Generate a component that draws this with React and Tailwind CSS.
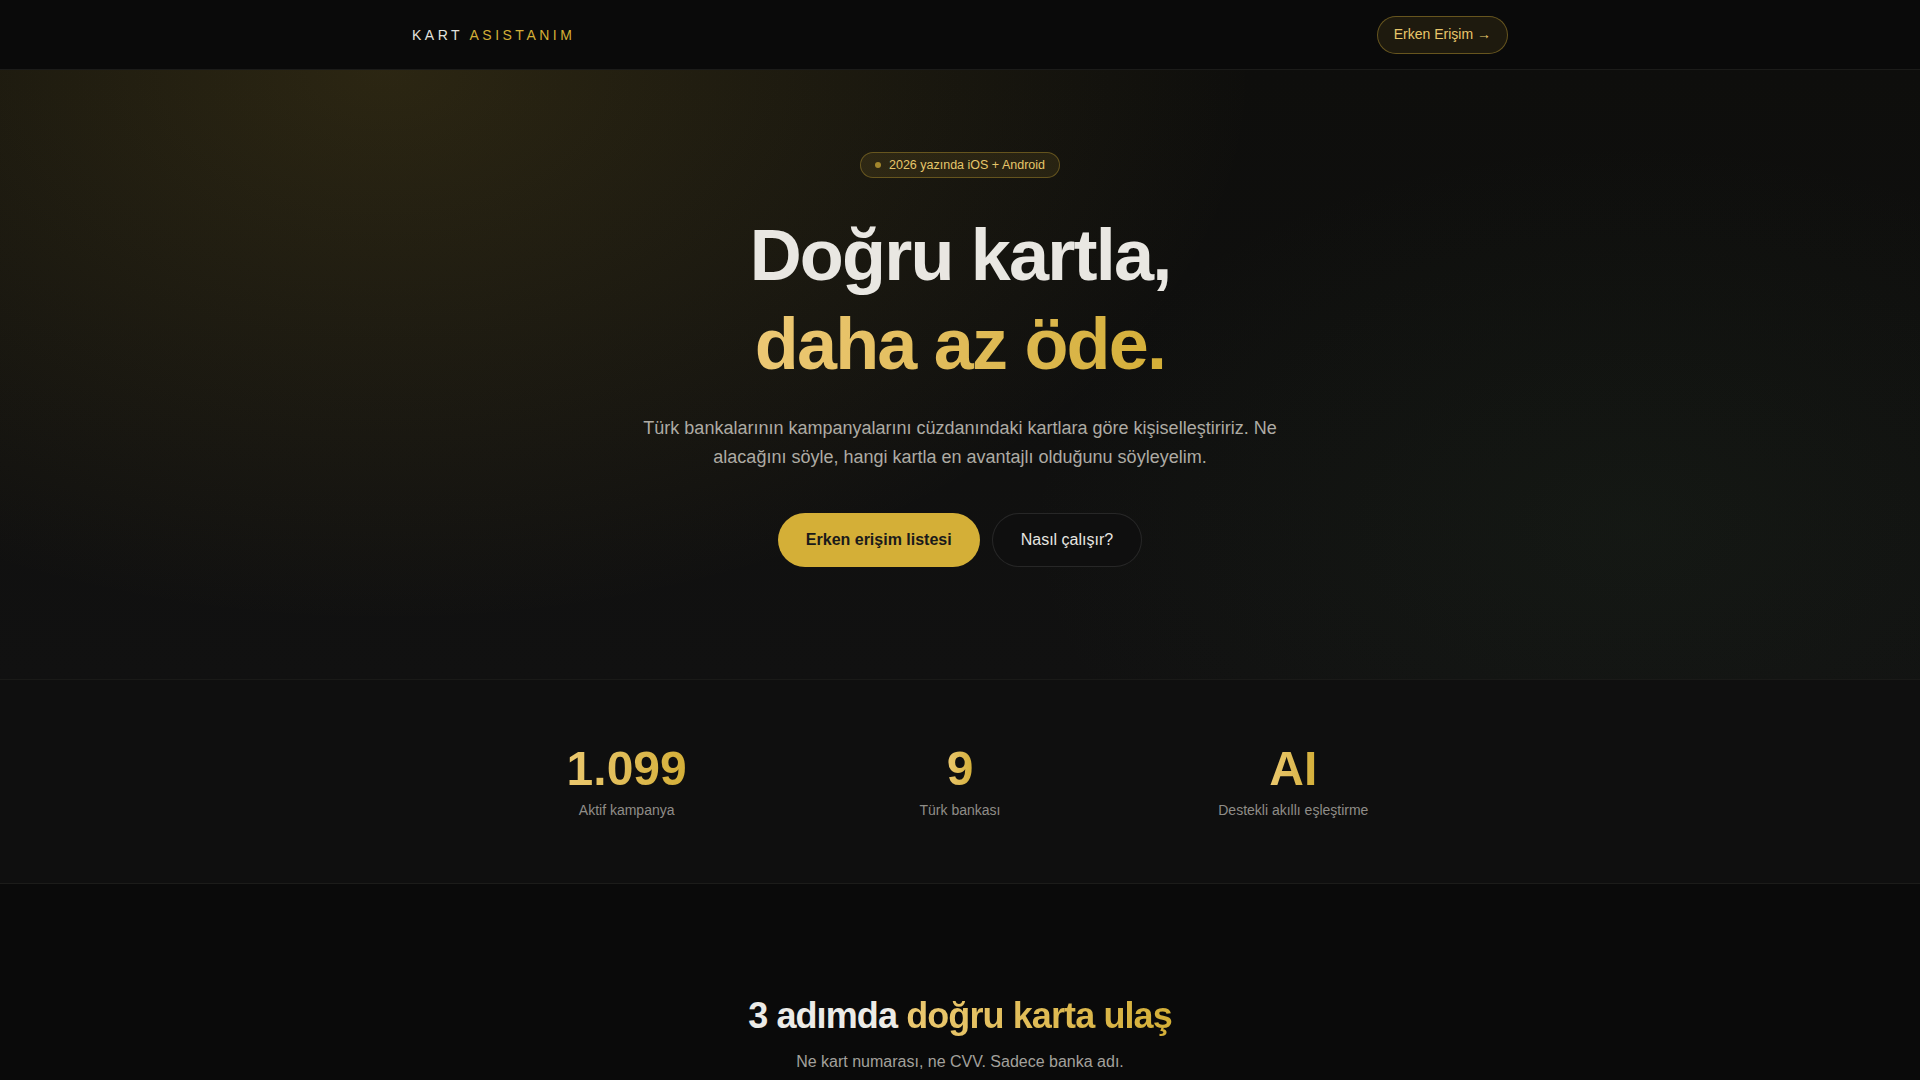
import React from 'react';

const stats = [
    { value: '1.099', label: 'Aktif kampanya' },
    { value: '9', label: 'Türk bankası' },
    { value: 'AI', label: 'Destekli akıllı eşleştirme' },
];

export default function App() {
    return (
        <div className="min-h-screen bg-[#0a0a0a] text-[#e8e6e1] font-['Liberation_Sans',Arial,sans-serif]">
            {/* nav */}
            <header className="h-[70px] bg-[#0a0a0a] border-b border-[#1c1c1a]">
                <div className="w-[1096px] mx-auto h-full flex items-center justify-between">
                    <div className="text-[14px] tracking-[0.25em] pt-[2px]">
                        <span className="text-[#e2e2de]">KART</span>{' '}
                        <span className="text-[#d4af37]">ASISTANIM</span>
                    </div>
                    <button className="h-[38px] px-4 rounded-full border border-[#d4af37]/40 bg-[#d4af37]/10 text-[#e8c66a] text-[14px]">
                        Erken Erişim →
                    </button>
                </div>
            </header>

            {/* hero */}
            <section className="h-[610px] border-b border-[#1a1a18] bg-[radial-gradient(ellipse_65%_130%_at_20%_0%,rgba(212,175,55,0.15),transparent_70%),radial-gradient(ellipse_45%_90%_at_85%_75%,rgba(60,100,60,0.09),transparent_70%),linear-gradient(#0e0e0c,#111111)]">
                <div className="flex flex-col items-center pt-[82px]">
                    <div className="h-[26px] px-[14px] flex items-center gap-2 rounded-full border border-[#d4af37]/35 bg-[#d4af37]/10 text-[12.5px] text-[#e6c66a]">
                        <span className="w-[6px] h-[6px] rounded-full bg-[#d4af37]/70" />
                        2026 yazında iOS + Android
                    </div>
                    <h1 className="mt-[33px] text-center text-[72px] font-bold tracking-tight leading-[89px]">
                        <span className="block text-[#e9e7e2]">Doğru kartla,</span>
                        <span className="inline-block bg-gradient-to-r from-[#edc874] to-[#d4af37] bg-clip-text text-transparent">daha az öde.</span>
                    </h1>
                    <p className="mt-[25px] max-w-2xl text-center text-[18px] leading-[29px] text-[#aeaba4]">
                        Türk bankalarının kampanyalarını cüzdanındaki kartlara göre kişiselleştiririz. Ne alacağını söyle, hangi kartla en avantajlı olduğunu söyleyelim.
                    </p>
                    <div className="mt-[41px] flex gap-3">
                        <button className="h-[54px] px-7 rounded-full bg-[#d4af37] text-[#1a1a1a] text-[16px] font-bold">
                            Erken erişim listesi
                        </button>
                        <button className="h-[54px] px-7 rounded-full border border-white/10 bg-[#0f0f0f] text-[#e8e6e1] text-[16px]">
                            Nasıl çalışır?
                        </button>
                    </div>
                </div>
            </section>

            {/* stats */}
            <section className="h-[204px] bg-[#0f0f0f] border-b border-[#1c1c1a] flex items-center">
                <div className="w-[1000px] mx-auto grid grid-cols-3 pb-[2px]">
                    {stats.map((s) => (
                        <div key={s.label} className="flex flex-col items-center">
                            <div className="text-[48px] leading-[56px] font-bold bg-gradient-to-r from-[#ebc86e] to-[#d4af37] bg-clip-text text-transparent">
                                {s.value}
                            </div>
                            <div className="mt-[3px] text-[14px] text-[#8f8d88]">{s.label}</div>
                        </div>
                    ))}
                </div>
            </section>

            {/* steps */}
            <section className="bg-[#0a0a0a] pt-[112px] pb-24">
                <div className="text-center">
                    <h2 className="text-[36px] leading-[40px] font-bold tracking-tight">
                        <span className="text-[#ecebe7]">3 adımda </span>
                        <span className="bg-gradient-to-r from-[#ebc870] to-[#d4af37] bg-clip-text text-transparent">doğru karta ulaş</span>
                    </h2>
                    <p className="mt-[14px] text-[16px] text-[#a3a19c]">Ne kart numarası, ne CVV. Sadece banka adı.</p>
                </div>
            </section>
        </div>
    );
}
